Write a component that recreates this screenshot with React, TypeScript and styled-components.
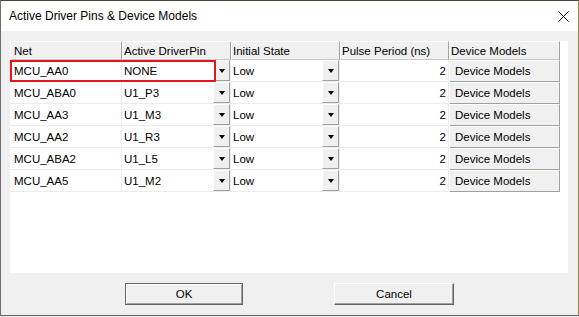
import React from 'react';
import styled, { createGlobalStyle } from 'styled-components';

const GlobalStyle = createGlobalStyle`
    html, body {
        margin: 0;
        padding: 0;
        background: #f0f0f0;
    }
    body {
        font-family: "Liberation Sans", Arial, sans-serif;
        font-size: 11.5px;
        color: #000;
    }
`;

const Window = styled.div`
    width: 579px;
    height: 316px;
    box-sizing: border-box;
    display: flex;
    flex-direction: column;
    background: #f0f0f0;
    border-top: 1px solid #3f4a3c;
    border-left: 1px solid #6e6e6e;
    border-bottom: 1px solid #5e5e5e;
    border-right: 1px solid #8e8a45;
`;

const TitleBar = styled.div`
    height: 30px;
    flex-shrink: 0;
    display: flex;
    align-items: center;
    justify-content: space-between;
    background: #fff;
    padding: 0 9px 0 8px;
`;

const Title = styled.span`
    font-size: 12px;
    color: #000;
`;

const CloseIcon = styled.svg`
    width: 11px;
    height: 11px;
    margin-top: 1px;
`;

const Body = styled.div`
    flex: 1;
    display: flex;
    flex-direction: column;
    gap: 10px;
    padding: 10px 10px 10px 9px;
`;

const GridPanel = styled.div`
    position: relative;
    height: 232px;
    flex-shrink: 0;
    background: #fff;
`;

const Table = styled.div`
    display: grid;
    grid-template-columns: 112px 109px 109px 109px 111px;
    grid-template-rows: 19px;
    grid-auto-rows: 22px;
`;

const HeadCell = styled.div<{ $first?: boolean }>`
    box-sizing: border-box;
    display: flex;
    align-items: center;
    padding-left: ${p => (p.$first ? 3 : 1)}px;
    background: #f0f0f0;
    border-top: 1px solid #fff;
    border-left: 1px solid #fff;
    border-right: 1px solid #a0a0a0;
    border-bottom: 1px solid #c8c8c8;
    white-space: nowrap;
`;

const Cell = styled.div<{ $pad?: number; $right?: boolean }>`
    box-sizing: border-box;
    display: flex;
    align-items: center;
    justify-content: ${p => (p.$right ? 'flex-end' : 'flex-start')};
    padding: ${p => (p.$right ? '0 2px 0 0' : `0 0 0 ${p.$pad ?? 2}px`)};
    border-right: 1px solid #ececec;
    border-bottom: 1px solid #ececec;
    white-space: nowrap;
`;

const ComboCell = styled(Cell)`
    justify-content: space-between;
    align-items: stretch;
    padding-right: 0;
`;

const ComboText = styled.span`
    display: flex;
    align-items: center;
`;

const ComboButton = styled.div`
    width: 17px;
    box-sizing: border-box;
    display: flex;
    align-items: center;
    justify-content: center;
    background: #f0f0f0;
    border-top: 1px solid #fff;
    border-left: 1px solid #fff;
    border-right: 1px solid #a0a0a0;
    border-bottom: 1px solid #a0a0a0;
`;

const Arrow = styled.div`
    width: 0;
    height: 0;
    border-left: 3.5px solid transparent;
    border-right: 3.5px solid transparent;
    border-top: 4px solid #000;
    margin-top: 1px;
`;

const ModelButton = styled.div`
    box-sizing: border-box;
    display: flex;
    align-items: center;
    padding-left: 5px;
    background: #f0f0f0;
    border-top: 1px solid #fff;
    border-left: 1px solid #fff;
    border-right: 1px solid #a0a0a0;
    border-bottom: 1px solid #a0a0a0;
    white-space: nowrap;
`;

const Highlight = styled.div`
    position: absolute;
    left: 0;
    top: 19px;
    width: 206px;
    height: 22px;
    box-sizing: border-box;
    border: 2px solid #e3161c;
    pointer-events: none;
`;

const ButtonRow = styled.div`
    display: flex;
    justify-content: center;
    gap: 91px;
    padding-left: 1px;
`;

const DialogButton = styled.button<{ $default?: boolean }>`
    height: 22px;
    box-sizing: border-box;
    padding: 0;
    font-family: "Liberation Sans", Arial, sans-serif;
    font-size: 11.5px;
    color: #000;
    background: #f0f0f0;
    border-top: 1px solid ${p => (p.$default ? '#646464' : '#fff')};
    border-left: 1px solid ${p => (p.$default ? '#646464' : '#fff')};
    border-right: 1px solid #646464;
    border-bottom: 1px solid #646464;
    box-shadow: ${p =>
        p.$default
            ? 'inset 1px 1px 0 #fff, inset -1px -1px 0 #a0a0a0'
            : 'inset -1px -1px 0 #a0a0a0'};
    width: ${p => (p.$default ? 118 : 120)}px;
`;

const rows = [
    { net: 'MCU_AA0', pin: 'NONE' },
    { net: 'MCU_ABA0', pin: 'U1_P3' },
    { net: 'MCU_AA3', pin: 'U1_M3' },
    { net: 'MCU_AA2', pin: 'U1_R3' },
    { net: 'MCU_ABA2', pin: 'U1_L5' },
    { net: 'MCU_AA5', pin: 'U1_M2' },
];

const Combo = ({ value }: { value: string }) => (
    <ComboCell>
        <ComboText>{value}</ComboText>
        <ComboButton>
            <Arrow />
        </ComboButton>
    </ComboCell>
);

const App = () => (
    <>
        <GlobalStyle />
        <Window>
            <TitleBar>
                <Title>Active Driver Pins &amp; Device Models</Title>
                <CloseIcon viewBox="0 0 11 11">
                    <path d="M0.5 0.5 L10.5 10.5 M10.5 0.5 L0.5 10.5" stroke="#000" strokeWidth="1" />
                </CloseIcon>
            </TitleBar>
            <Body>
                <GridPanel>
                    <Table>
                        <HeadCell $first>Net</HeadCell>
                        <HeadCell>Active DriverPin</HeadCell>
                        <HeadCell>Initial State</HeadCell>
                        <HeadCell>Pulse Period (ns)</HeadCell>
                        <HeadCell>Device Models</HeadCell>
                        {rows.map(r => (
                            <React.Fragment key={r.net}>
                                <Cell $pad={4}>{r.net}</Cell>
                                <Combo value={r.pin} />
                                <Combo value="Low" />
                                <Cell $right>2</Cell>
                                <ModelButton>Device Models</ModelButton>
                            </React.Fragment>
                        ))}
                    </Table>
                    <Highlight />
                </GridPanel>
                <ButtonRow>
                    <DialogButton $default>OK</DialogButton>
                    <DialogButton>Cancel</DialogButton>
                </ButtonRow>
            </Body>
        </Window>
    </>
);

export default App;
